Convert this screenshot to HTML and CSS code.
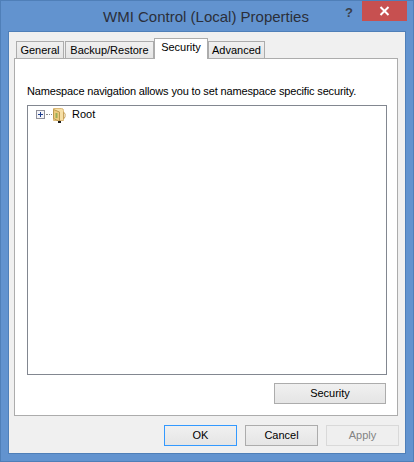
FILE: index.html
```html
<!DOCTYPE html>
<html lang="en">
<head>
<meta charset="utf-8">
<title>WMI Control (Local) Properties</title>
<link rel="stylesheet" href="styles.css">
</head>
<body>
<div class="window">
  <div class="titlebar">
    <div class="title">WMI Control (Local) Properties</div>
    <div class="help">?</div>
    <div class="close">
      <svg width="11" height="10" viewBox="0 0 11 10"><path d="M1.5 1 L9.5 9 M9.5 1 L1.5 9" stroke="#fff" stroke-width="2" fill="none"/></svg>
    </div>
  </div>
  <div class="client">
    <div class="tabs">
      <div class="tab tab-general">General</div>
      <div class="tab tab-backup">Backup/Restore</div>
      <div class="tab tab-active">Security</div>
      <div class="tab tab-advanced">Advanced</div>
    </div>
    <div class="panel">
      <p class="hint">Namespace navigation allows you to set namespace specific security.</p>
      <div class="tree">
        <div class="node">
          <span class="expander">
            <svg width="9" height="9" viewBox="0 0 9 9"><rect x="0.5" y="0.5" width="8" height="8" fill="#f4f4f8" stroke="#8e8f9a"/><path d="M2 4.5 H7 M4.5 2 V7" stroke="#1f3f8f" fill="none"/></svg>
          </span>
          <span class="dots"></span>
          <svg class="folder" width="14" height="16" viewBox="0 0 14 16">
            <path d="M1.500 1.500 H9.500 Q11.500 1.500 11.500 3.500 V13.500 H1.500 Z" fill="#f6dfa6" stroke="#dcb877"/>
            <path d="M11.500 5 Q14 6.500 13 10 L11.500 12 Z" fill="#fff" stroke="#c9a45c"/>
            <path d="M1.500 2.500 L7.500 5 V14.500 L1.500 11.500 Z" fill="#ecca7c" stroke="#bd9a4e"/>
            <path d="M4.500 6 V11" stroke="#9bae58" stroke-width="2" fill="none"/>
            <rect x="6" y="14" width="3" height="2" fill="#1c1c1c"/>
          </svg>
          <span class="label">Root</span>
        </div>
      </div>
      <div class="panel-actions">
        <button class="btn btn-security" type="button">Security</button>
      </div>
    </div>
    <div class="footer">
      <button class="btn btn-ok" type="button">OK</button>
      <button class="btn" type="button">Cancel</button>
      <button class="btn btn-disabled" type="button" disabled>Apply</button>
    </div>
  </div>
</div>
</body>
</html>
```
FILE: styles.css
```css
* { box-sizing: border-box; }
html, body { margin: 0; padding: 0; }
body {
  width: 414px;
  height: 462px;
  overflow: hidden;
  font-family: "Liberation Sans", Arial, sans-serif;
  font-size: 11px;
  color: #000;
}
.window {
  width: 414px;
  height: 462px;
  background: #6293cf;
  border: 1px solid #4f7fb8;
  display: flex;
  flex-direction: column;
}
.titlebar {
  height: 30px;
  flex: none;
  display: flex;
  align-items: flex-start;
  position: relative;
}
.title {
  width: 100%;
  padding: 6px 0 0 0;
  margin-left: -1px;
  text-align: center;
  font-size: 15px;
  line-height: 20px;
  color: #2b2f3a;
}
.help {
  position: absolute;
  left: 344px;
  top: 3px;
  font-family: "Liberation Sans", sans-serif;
  font-weight: 700;
  font-size: 13px;
  line-height: 18px;
  color: #3a3f4a;
}
.close {
  position: absolute;
  left: 361px;
  top: 0;
  width: 45px;
  height: 20px;
  background: #c75050;
  display: flex;
  align-items: center;
  justify-content: center;
}
.client {
  flex: 1;
  margin: 0 7px 7px 7px;
  background: #f0f0f0;
  border: 1px solid #4f7fb8;
  padding: 5px 8px 0 5px;
  display: flex;
  flex-direction: column;
}
.tabs {
  display: flex;
  align-items: flex-end;
  height: 21px;
  padding-left: 2px;
  position: relative;
  z-index: 1;
}
.tab {
  height: 17px;
  border: 1px solid #acacac;
  border-bottom: none;
  background: linear-gradient(#f0f0f0, #e5e5e5);
  text-align: center;
  line-height: 16px;
  white-space: nowrap;
}
.tab-general { width: 48px; margin-right: 1px; }
.tab-backup { width: 89px; }
.tab-active {
  width: 54px;
  height: 21px;
  background: #fff;
  line-height: 17px;
  margin-bottom: -1px;
}
.tab-advanced { width: 57px; }
.panel {
  width: 384px;
  height: 358px;
  background: #fff;
  border: 1px solid #acacac;
  padding: 0 10px 0 12px;
  display: flex;
  flex-direction: column;
}
.hint {
  margin: 0;
  padding-top: 22px;
  line-height: 21px;
  height: 46px;
  white-space: nowrap;
  letter-spacing: -0.15px;
}
.tree {
  height: 270px;
  border: 1px solid #828790;
  background: #fff;
  padding: 0 0 0 8px;
}
.node {
  display: flex;
  align-items: center;
  height: 17px;
}
.expander { display: flex; width: 9px; height: 9px; }
.dots {
  width: 6px;
  margin-left: 1px;
  border-top: 1px dotted #888;
}
.folder { flex: none; margin-top: 1px; }
.label { margin-left: 6px; line-height: 17px; }
.panel-actions {
  display: flex;
  justify-content: flex-end;
  padding: 8px 1px 0 0;
}
.btn {
  width: 73px;
  height: 21px;
  padding: 0;
  border: 1px solid #acacac;
  background: linear-gradient(#f0f0f0, #e5e5e5);
  font: inherit;
  line-height: 17px;
  color: #000;
}
.btn-security { width: 112px; }
.btn-ok { border-color: #3399ff; }
.btn-disabled {
  background: #efefef;
  border-color: #d9d9d9;
  color: #838383;
}
.footer {
  display: flex;
  justify-content: flex-end;
  gap: 8px;
  padding-top: 9px;
  margin-right: -2px;
}
```
